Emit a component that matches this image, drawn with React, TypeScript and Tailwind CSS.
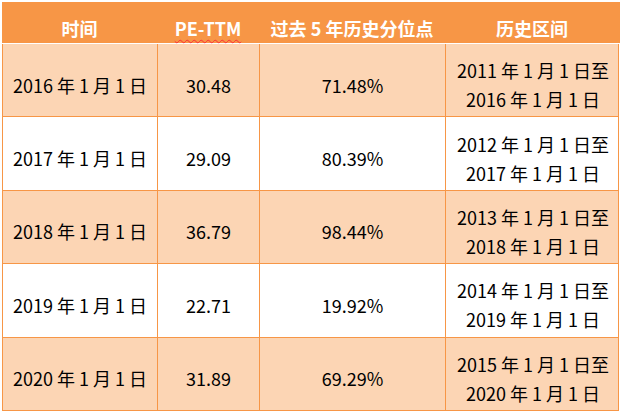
import React from 'react';

const rows = [
  { date: "2016 年 1 月 1 日", pe: "30.48", pct: "71.48%", from: "2011 年 1 月 1 日至", to: "2016 年 1 月 1 日" },
  { date: "2017 年 1 月 1 日", pe: "29.09", pct: "80.39%", from: "2012 年 1 月 1 日至", to: "2017 年 1 月 1 日" },
  { date: "2018 年 1 月 1 日", pe: "36.79", pct: "98.44%", from: "2013 年 1 月 1 日至", to: "2018 年 1 月 1 日" },
  { date: "2019 年 1 月 1 日", pe: "22.71", pct: "19.92%", from: "2014 年 1 月 1 日至", to: "2019 年 1 月 1 日" },
  { date: "2020 年 1 月 1 日", pe: "31.89", pct: "69.29%", from: "2015 年 1 月 1 日至", to: "2020 年 1 月 1 日" },
];

const cols = "grid grid-cols-[155px_102px_186px_174px]";

const App: React.FC = () => {
  return (
    <div
      className="w-[622px] h-[414px] bg-white pl-[2px] pt-[2px]"
      style={{ fontFamily: '"Noto Sans CJK SC", "Noto Sans", sans-serif' }}
    >
      {/* header */}
      <div className={`${cols} w-[618px] h-[42px] bg-[#F79646] text-white font-bold text-[18px] border-b border-white`}>
        <div className="flex items-end justify-center pb-[1px]">时间</div>
        <div className="flex items-end justify-center pb-[1px]">
          <span className="underline decoration-wavy decoration-red-500 decoration-1 underline-offset-[3px]">PE-TTM</span>
        </div>
        <div className="flex items-end justify-center pb-[1px]">过去 5 年历史分位点</div>
        <div className="flex items-end justify-center pb-[1px]">历史区间</div>
      </div>

      {/* body */}
      <div className="w-[617px] border-l border-r border-[#F79646] text-[18px] text-black">
        {rows.map((r, i) => (
          <div
            key={i}
            className={`${cols} h-[73.4px] border-b border-[#F79646] ${i % 2 === 0 ? "bg-[#FCD5B4]" : "bg-white"}`}
          >
            <div className="flex items-center justify-center pt-[10px] border-r border-[#F79646]">{r.date}</div>
            <div className="flex items-center justify-center pt-[10px] border-r border-[#F79646]">{r.pe}</div>
            <div className="flex items-center justify-center pt-[10px] border-r border-[#F79646]">{r.pct}</div>
            <div className="flex flex-col items-center justify-center pt-[10px] leading-[29px]">
              <span>{r.from}</span>
              <span>{r.to}</span>
            </div>
          </div>
        ))}
      </div>
    </div>
  );
};

export default App;
